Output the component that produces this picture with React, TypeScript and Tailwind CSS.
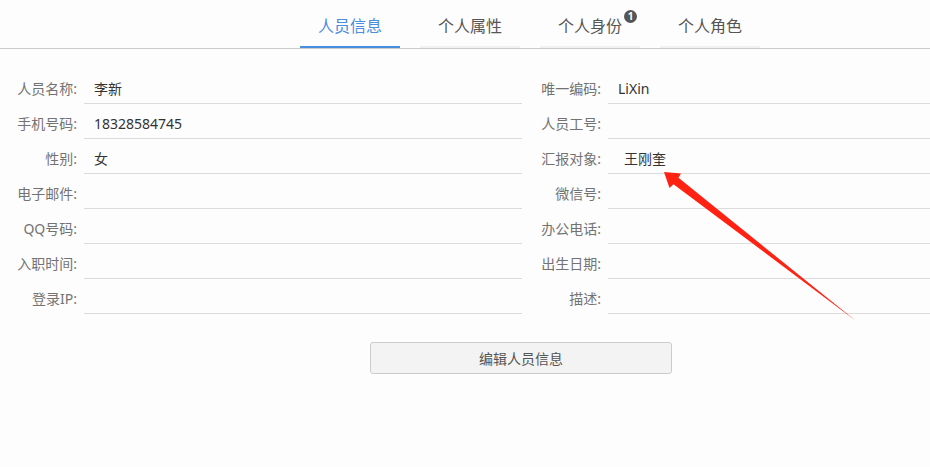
import React from "react";

const leftRows: [string, string][] = [
  ["人员名称:", "李新"],
  ["手机号码:", "18328584745"],
  ["性别:", "女"],
  ["电子邮件:", ""],
  ["QQ号码:", ""],
  ["入职时间:", ""],
  ["登录IP:", ""],
];

const rightRows: [string, string][] = [
  ["唯一编码:", "LiXin"],
  ["人员工号:", ""],
  ["汇报对象:", "王刚奎"],
  ["微信号:", ""],
  ["办公电话:", ""],
  ["出生日期:", ""],
  ["描述:", ""],
];

function Row({ label, value, extra }: { label: string; value: string; extra?: boolean }) {
  return (
    <div className="flex h-[35px]">
      <div className="w-[77px] shrink-0 text-right text-[14px] text-[#737373] pt-[10px] leading-[20px]">{label}</div>
      <div
        className={
          "ml-[7px] flex-1 border-b border-[#dcdcdc] text-[14px] text-[#333] pt-[10px] leading-[20px] " +
          (extra ? "pl-[16px]" : "pl-[10px]")
        }
      >
        {value}
      </div>
    </div>
  );
}

export default function App() {
  const tabs = ["人员信息", "个人属性", "个人身份", "个人角色"];
  return (
    <div
      className="relative w-[930px] h-[467px] bg-[#fdfdfd] overflow-hidden"
      style={{ fontFamily: '"Noto Sans", "Noto Sans CJK SC", sans-serif' }}
    >
      <div className="flex h-[49px] border-b border-[#cccccc] pl-[300px] gap-[20px]">
        {tabs.map((t, i) => (
          <div
            key={t}
            className={
              "relative w-[100px] h-[48px] flex items-center justify-center text-[16px] border-b-[2px] pt-[6px] " +
              (i === 0 ? "border-[#4a8ee0] text-[#4a8ee0]" : "border-[#f2f2f2] text-[#555]")
            }
          >
            {t}
            {i === 2 && (
              <span className="absolute left-[84px] top-[10px] w-[13px] h-[13px] rounded-full bg-[#555] text-white text-[10px] font-bold leading-[13px] text-center">
                1
              </span>
            )}
          </div>
        ))}
      </div>

      <div className="flex mt-[20px]">
        <div className="w-[522px]">
          {leftRows.map(([l, v]) => (
            <Row key={l} label={l} value={v} />
          ))}
        </div>
        <div className="flex-1 ml-[2px]">
          {rightRows.map(([l, v]) => (
            <Row key={l} label={l} value={v} extra={l === "汇报对象:"} />
          ))}
        </div>
      </div>

      <div className="mt-[28px] ml-[370px]">
        <button className="w-[302px] h-[32px] bg-[#f3f3f3] border border-[#cccccc] rounded-[3px] text-[14px] text-[#555]">
          编辑人员信息
        </button>
      </div>

      <svg className="absolute left-0 top-0 pointer-events-none" width="930" height="467">
        <polygon
          points="664,172 681,173.5 678.5,177.8 856,321 673.5,184.2 669.5,188"
          fill="#ff2213"
        />
      </svg>
    </div>
  );
}
